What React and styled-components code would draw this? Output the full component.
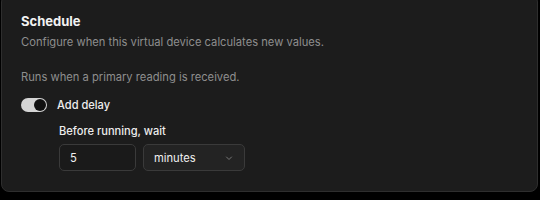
import React from "react";
import styled, { createGlobalStyle } from "styled-components";

const Global = createGlobalStyle`
  html, body { margin: 0; padding: 0; background: #000; }
  body { font-family: Inter, "Noto Sans", sans-serif; -webkit-font-smoothing: antialiased; }
`;

const Page = styled.div`
  width: 540px;
  height: 200px;
  overflow: hidden;
  padding: 0 2px 0 1px;
  box-sizing: border-box;
`;

const Card = styled.section`
  margin-top: -6px;
  background: #1c1c1c;
  border: 1px solid #2e2e2e;
  border-radius: 8px;
  padding: 16px 19px 20px 19px;
  display: flex;
  flex-direction: column;
`;

const Title = styled.h2`
  margin: 0;
  font-size: 13px;
  font-weight: 650;
  color: #f2f2f2;
  line-height: 20px;
`;

const Muted = styled.p`
  margin: ${(p) => p.$mt || 0}px 0 0 0;
  font-size: 11.2px;
  line-height: 16px;
  color: #8e8e8e;
`;

const ToggleRow = styled.label`
  display: flex;
  align-items: center;
  gap: 10px;
  margin-top: 12px;
  font-size: 11.1px;
  line-height: 16px;
  color: #ededed;
  font-weight: 500;
`;

const Track = styled.span`
  width: 26px;
  height: 14px;
  border-radius: 7px;
  background: #d4d4d4;
  display: flex;
  align-items: center;
  justify-content: ${(p) => (p.$on ? "flex-end" : "flex-start")};
  padding: 1px;
  box-sizing: border-box;
`;

const Thumb = styled.span`
  width: 12px;
  height: 12px;
  border-radius: 50%;
  background: #111;
`;

const Delay = styled.div`
  margin: 10px 0 0 38px;
  display: flex;
  flex-direction: column;
  gap: 5px;
`;

const Label = styled.div`
  font-size: 11.1px;
  font-weight: 500;
  color: #ededed;
  line-height: 16px;
`;

const Fields = styled.div`
  display: flex;
  gap: 7px;
`;

const Input = styled.div`
  width: 77px;
  height: 27px;
  box-sizing: border-box;
  border: 1px solid #3a3a3a;
  border-radius: 5px;
  background: #1a1a1a;
  color: #f0f0f0;
  font-size: 11.2px;
  display: flex;
  align-items: center;
  padding: 0 10px;
`;

const Select = styled(Input)`
  width: 102px;
  background: #232323;
  justify-content: space-between;
`;

export default function App() {
  return (
    <Page>
      <Global />
      <Card>
        <Title>Schedule</Title>
        <Muted $mt={3}>Configure when this virtual device calculates new values.</Muted>
        <Muted $mt={19}>Runs when a primary reading is received.</Muted>
        <ToggleRow>
          <Track $on>
            <Thumb />
          </Track>
          Add delay
        </ToggleRow>
        <Delay>
          <Label>Before running, wait</Label>
          <Fields>
            <Input>5</Input>
            <Select>
              minutes
              <svg width="10" height="10" viewBox="0 0 10 10">
                <path d="M2.5 4 L5 6.5 L7.5 4" stroke="#777" strokeWidth="1" fill="none" strokeLinecap="round" strokeLinejoin="round" />
              </svg>
            </Select>
          </Fields>
        </Delay>
      </Card>
    </Page>
  );
}
